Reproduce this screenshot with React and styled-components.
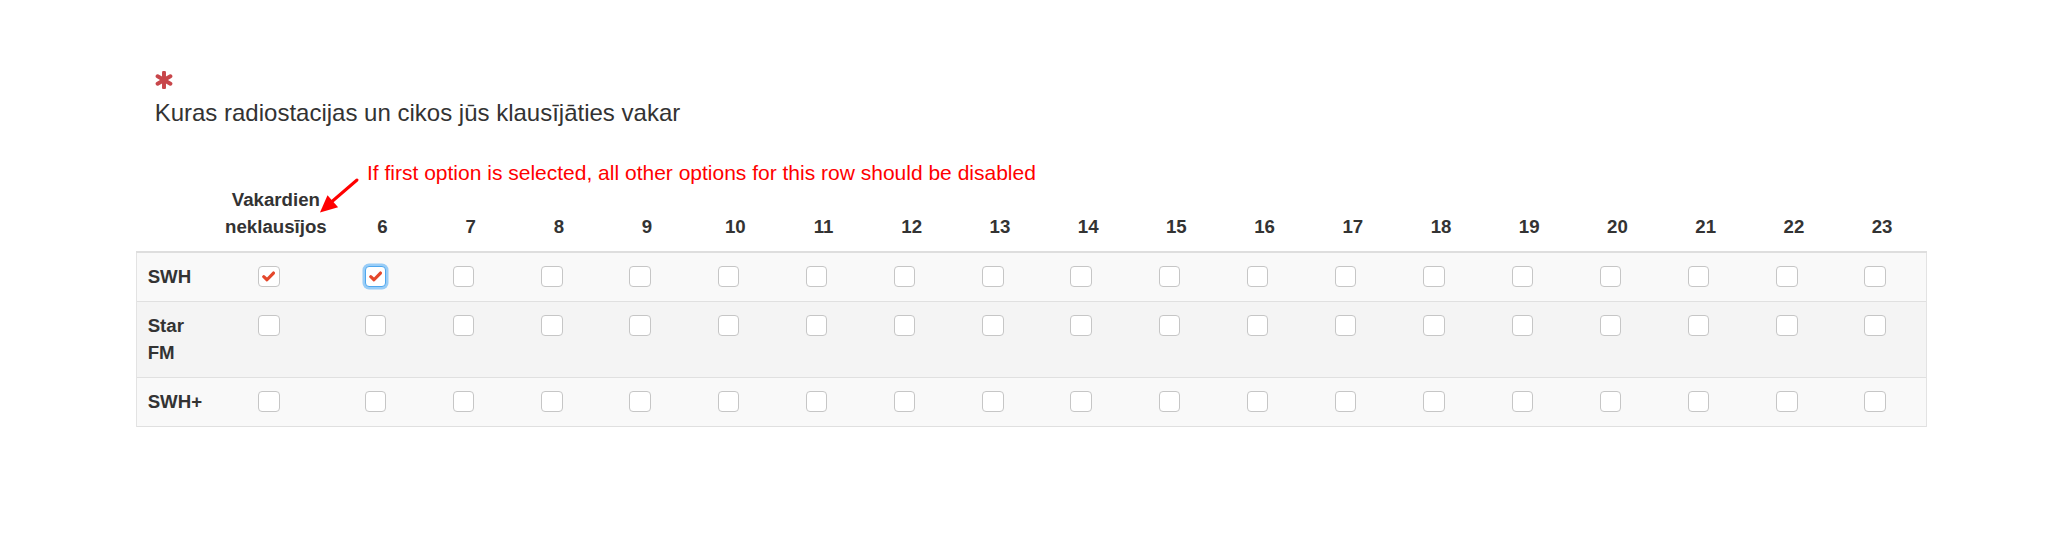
import React from "react";
import styled, { createGlobalStyle, css } from "styled-components";

const GlobalStyle = createGlobalStyle`
  html, body { margin: 0; padding: 0; background: #ffffff; }
  body {
    font-family: "Liberation Sans", Helvetica, Arial, sans-serif;
    color: #333333;
  }
`;

const Page = styled.div`
  position: relative;
  width: 2048px;
  height: 546px;
  box-sizing: border-box;
  padding: 71px 0 0 136px;
`;

const Question = styled.div`
  padding-left: 18.67px;
`;

const Required = styled.svg`
  display: block;
  width: 18px;
  height: 18px;
  margin-bottom: 10.5px;
`;

const QuestionText = styled.div`
  font-size: 24px;
  line-height: 26.67px;
  color: #333333;
`;

const Table = styled.table`
  margin-top: 50.5px;
  width: 1790px;
  table-layout: fixed;
  border-collapse: collapse;
  font-size: 18.67px;
  line-height: 26.67px;
`;

const HeadCell = styled.th`
  padding: 10.67px;
  font-weight: bold;
  text-align: center;
  vertical-align: bottom;
  color: #333333;
  border-bottom: 2.67px solid #dedede;
`;

const Row = styled.tr`
  background: ${(p) => (p.$striped ? "#f9f9f9" : "#f4f4f4")};
  border-top: 1.33px solid #e0e0e0;
  &:last-child { border-bottom: 1.33px solid #e0e0e0; }
  & > td:first-child { border-left: 1.33px solid #e3e3e3; }
  & > td:last-child { border-right: 1.33px solid #e3e3e3; }
`;

const LabelCell = styled.td`
  padding: 10.67px;
  font-weight: bold;
  vertical-align: top;
  color: #333333;
`;

const CheckCell = styled.td`
  padding: 10.67px;
  text-align: center;
  vertical-align: top;
`;

const Box = styled.span`
  display: inline-flex;
  align-items: center;
  justify-content: center;
  box-sizing: border-box;
  width: 21.33px;
  height: 21.33px;
  margin: 2px 14px 0 0;
  vertical-align: top;
  background: #ffffff;
  border: 1.33px solid #c6c6c6;
  border-radius: 4px;
  ${(p) =>
    p.$focused &&
    css`
      border-color: #4ea7ee;
      box-shadow: 0 0 0 2.5px rgba(120, 190, 245, 0.75);
    `}
`;

const Tick = styled.svg`
  width: 13px;
  height: 11px;
`;

const Note = styled.div`
  position: absolute;
  left: 367px;
  top: 160px;
  font-size: 21px;
  line-height: 26.67px;
  color: #ff0000;
  white-space: nowrap;
`;

const Arrow = styled.svg`
  position: absolute;
  left: 310px;
  top: 170px;
  width: 60px;
  height: 50px;
`;

const hours = Array.from({ length: 18 }, (_, i) => i + 6);
const stations = [
  { name: "SWH", striped: true, checked: [0, 1], focused: 1 },
  { name: "Star FM", striped: false, checked: [], focused: -1 },
  { name: "SWH+", striped: true, checked: [], focused: -1 },
];

function Checkbox({ checked, focused }) {
  return (
    <Box $focused={focused}>
      {checked && (
        <Tick viewBox="0 0 12 10">
          <polyline
            points="1.6,5.2 4.6,8 10.6,1.8"
            fill="none"
            stroke="#e4472b"
            strokeWidth="2.9"
            strokeLinecap="round"
            strokeLinejoin="round"
          />
        </Tick>
      )}
    </Box>
  );
}

export default function App() {
  const hourWidth = (1790 - 77 - 124.8) / 18;
  return (
    <>
      <GlobalStyle />
      <Page>
        <Question>
          <Required viewBox="0 0 20 20">
            <g stroke="#c8464a" strokeWidth="4.4" strokeLinecap="round">
              <line x1="10" y1="1.8" x2="10" y2="18.2" />
              <line x1="2.9" y1="5.9" x2="17.1" y2="14.1" />
              <line x1="2.9" y1="14.1" x2="17.1" y2="5.9" />
            </g>
          </Required>
          <QuestionText>Kuras radiostacijas un cikos jūs klausījāties vakar</QuestionText>
        </Question>
        <Table>
          <colgroup>
            <col style={{ width: 77 }} />
            <col style={{ width: 124.8 }} />
            {hours.map((h) => (
              <col key={h} style={{ width: hourWidth }} />
            ))}
          </colgroup>
          <thead>
            <tr>
              <HeadCell />
              <HeadCell>Vakardien neklausījos</HeadCell>
              {hours.map((h) => (
                <HeadCell key={h}>{h}</HeadCell>
              ))}
            </tr>
          </thead>
          <tbody>
            {stations.map((s) => (
              <Row key={s.name} $striped={s.striped}>
                <LabelCell>{s.name}</LabelCell>
                {[0, ...hours].map((h, i) => (
                  <CheckCell key={i}>
                    <Checkbox checked={s.checked.includes(i)} focused={s.focused === i} />
                  </CheckCell>
                ))}
              </Row>
            ))}
          </tbody>
        </Table>
        <Note>If first option is selected, all other options for this row should be disabled</Note>
        <Arrow viewBox="0 0 60 50">
          <line x1="47" y1="10" x2="22" y2="31.5" stroke="#ff0000" strokeWidth="3" strokeLinecap="round" />
          <polygon points="10,42.5 17.5,25.3 28.1,37.3" fill="#ff0000" />
        </Arrow>
      </Page>
    </>
  );
}
